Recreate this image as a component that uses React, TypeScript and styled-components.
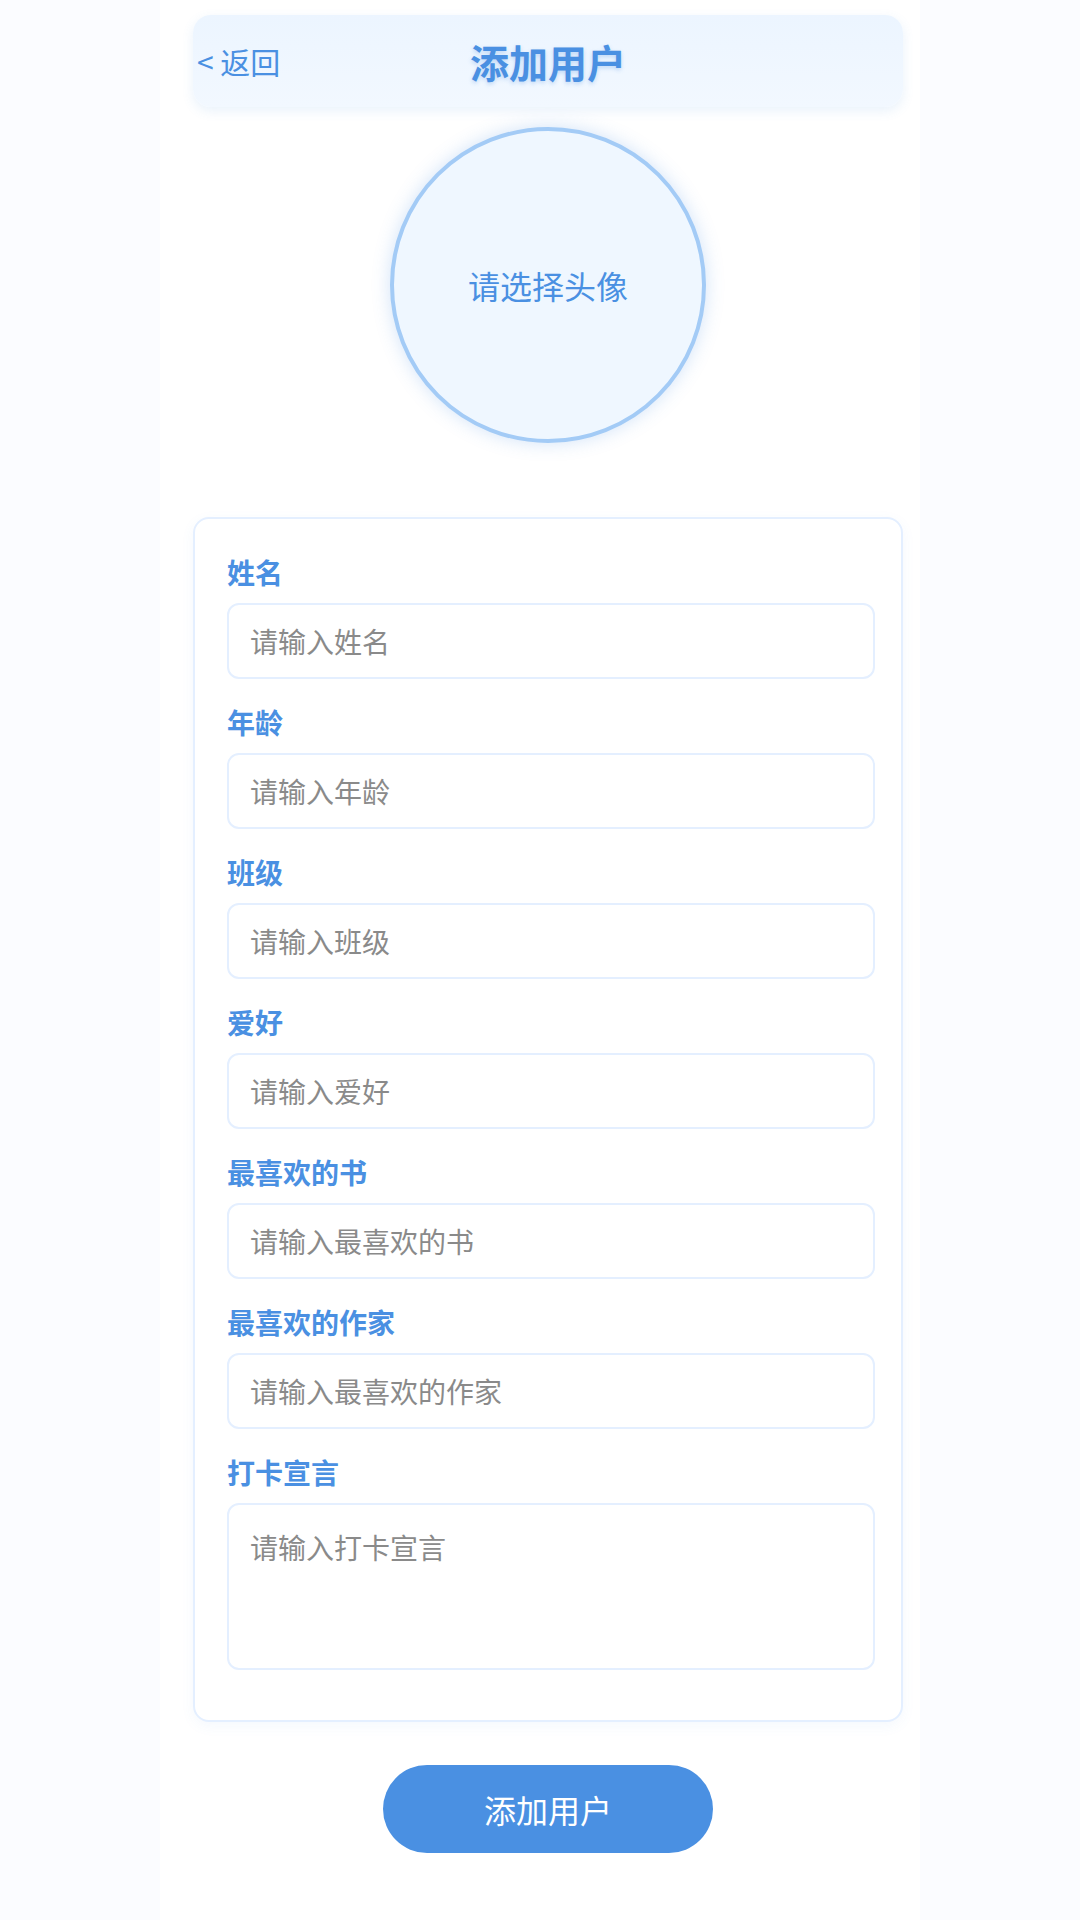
import styled, { createGlobalStyle } from "styled-components";

const GlobalStyle = createGlobalStyle`
  body {
    margin: 0;
    background-color: #fbfcff;
    font-family: "Noto Sans CJK SC", "Noto Sans", sans-serif;
  }
  * {
    box-sizing: border-box;
  }
`;

const PRIMARY = "#4a90e2";

const Page = styled.div`
  width: 760px;
  min-height: 1920px;
  margin: 0 auto;
  padding: 15px 17px 40px 33px;
  background-color: #ffffff;
  display: flex;
  flex-direction: column;
  align-items: center;
`;

const Header = styled.header`
  width: 100%;
  height: 92px;
  padding: 0 4px;
  border-radius: 18px;
  background: linear-gradient(180deg, #ecf5ff 0%, #f2f8ff 100%);
  box-shadow: 0 4px 12px rgba(74, 144, 226, 0.12);
  display: grid;
  grid-template-columns: 1fr auto 1fr;
  align-items: center;
`;

const BackButton = styled.button`
  justify-self: start;
  border: none;
  background: none;
  padding: 0;
  font-family: inherit;
  font-size: 30px;
  color: ${PRIMARY};
  cursor: pointer;
`;

const Title = styled.h1`
  margin: 0;
  font-size: 39px;
  font-weight: 700;
  color: ${PRIMARY};
  text-shadow: 0 2px 4px rgba(74, 144, 226, 0.3);
`;

const Avatar = styled.div`
  margin-top: 20px;
  width: 316px;
  height: 316px;
  border-radius: 50%;
  border: 4px solid #a3cbf6;
  background-color: #eff7ff;
  box-shadow: 0 0 18px rgba(74, 144, 226, 0.25);
  display: flex;
  align-items: center;
  justify-content: center;
  font-size: 32px;
  color: ${PRIMARY};
  cursor: pointer;
`;

const FormCard = styled.form`
  width: 100%;
  margin-top: 74px;
  padding: 36px 26px 24px 32px;
  border: 2px solid #e4efff;
  border-radius: 16px;
  background-color: #ffffff;
  box-shadow: 0 4px 14px rgba(74, 144, 226, 0.06);
  display: flex;
  flex-direction: column;
`;

const Field = styled.div`
  display: flex;
  flex-direction: column;
  margin-bottom: 26px;
`;

const Label = styled.label`
  font-size: 28px;
  line-height: 34px;
  font-weight: 700;
  color: ${PRIMARY};
  margin-bottom: 14px;
`;

const fieldBox = `
  width: 100%;
  border: 2px solid #e4efff;
  border-radius: 12px;
  background-color: #ffffff;
  font-family: inherit;
  font-size: 28px;
  color: #333;
  outline: none;

  &::placeholder {
    color: #8a8a8a;
  }
`;

const Input = styled.input`
  ${fieldBox}
  height: 76px;
  padding: 0 21px;
`;

const TextArea = styled.textarea`
  ${fieldBox}
  height: 167px;
  padding: 22px 21px;
  line-height: 40px;
  resize: none;
`;

const SubmitButton = styled.button`
  margin-top: 43px;
  width: 330px;
  height: 88px;
  border: none;
  border-radius: 44px;
  background-color: ${PRIMARY};
  color: #ffffff;
  font-family: inherit;
  font-size: 32px;
  cursor: pointer;
`;

const fields = [
  { key: "name", label: "姓名" },
  { key: "age", label: "年龄" },
  { key: "className", label: "班级" },
  { key: "hobby", label: "爱好" },
  { key: "book", label: "最喜欢的书" },
  { key: "writer", label: "最喜欢的作家" },
];

const App = () => {
  return (
    <>
      <GlobalStyle />
      <Page>
        <Header>
          <BackButton type="button">&lt; 返回</BackButton>
          <Title>添加用户</Title>
          <span />
        </Header>

        <Avatar>请选择头像</Avatar>

        <FormCard onSubmit={(e) => e.preventDefault()}>
          {fields.map((f) => (
            <Field key={f.key}>
              <Label htmlFor={f.key}>{f.label}</Label>
              <Input id={f.key} placeholder={`请输入${f.label}`} />
            </Field>
          ))}
          <Field>
            <Label htmlFor="slogan">打卡宣言</Label>
            <TextArea id="slogan" placeholder="请输入打卡宣言" />
          </Field>
        </FormCard>

        <SubmitButton type="button">添加用户</SubmitButton>
      </Page>
    </>
  );
};

export default App;
